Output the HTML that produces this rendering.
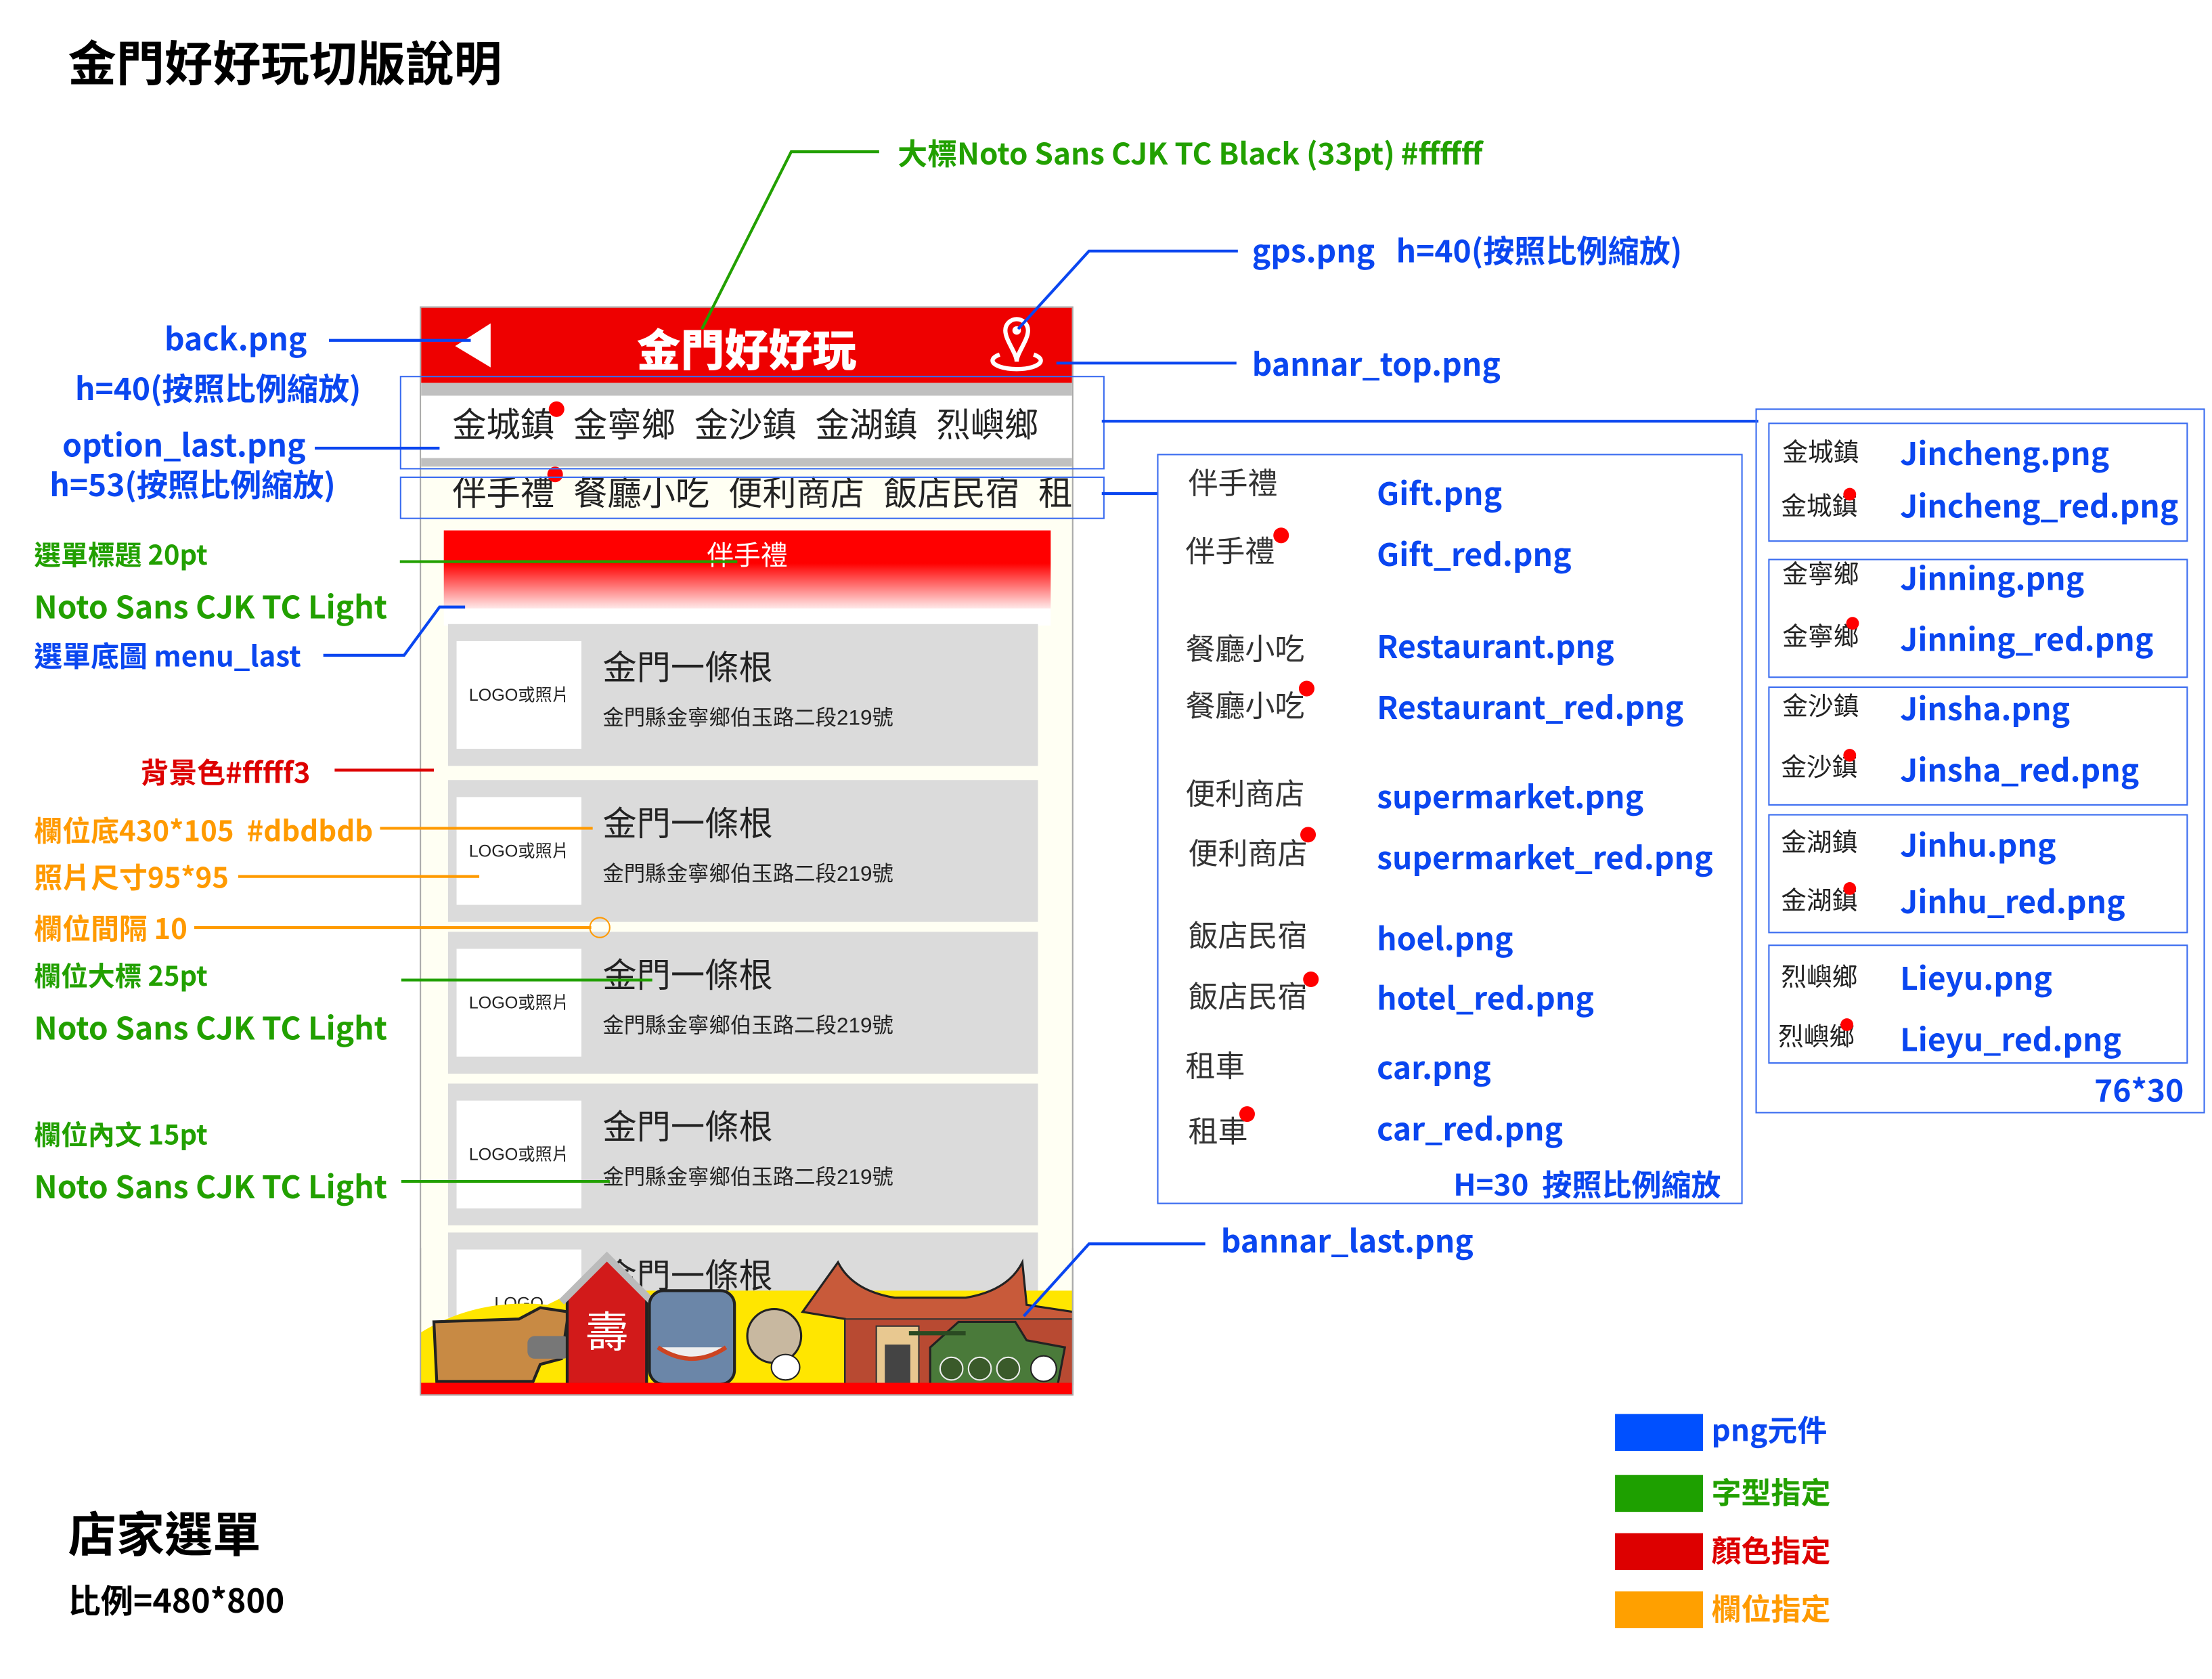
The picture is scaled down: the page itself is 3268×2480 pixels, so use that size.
<!DOCTYPE html>
<html><head><meta charset="utf-8"><style>
html,body{margin:0;padding:0;background:#fff;}
body{width:3268px;height:2480px;overflow:hidden;position:relative;}
#s{position:absolute;left:0;top:0;width:1560px;height:1184px;transform:scale(2.0949);transform-origin:0 0;}
.t{position:absolute;white-space:nowrap;line-height:1;font-family:"Liberation Sans Narrow","Noto Sans CJK TC",sans-serif;font-weight:bold;}
.b{color:#0a46f0;font-size:22px;}
.g{color:#22a000;font-size:21px;}
.o{color:#ff9a00;font-size:20px;}
.r{color:#dd0000;font-size:20px;}
.bx{position:absolute;border:1px solid #3a6cf0;}
.dot{position:absolute;width:11px;height:11px;border-radius:50%;background:#f00;}
.card{position:absolute;left:316px;width:416px;height:100px;background:#dbdbdb;}
.card .lg{position:absolute;left:6px;top:12px;width:88px;height:76px;background:#fff;font-size:12px;color:#222;line-height:76px;text-align:center;font-family:"Liberation Sans","Noto Sans CJK TC",sans-serif;}
.card .h{position:absolute;left:109px;top:20px;font-size:24px;color:#222;font-family:"Liberation Sans","Noto Sans CJK TC",sans-serif;line-height:1;}
.card .a{position:absolute;left:109px;top:59px;font-size:15px;color:#222;font-family:"Liberation Sans","Noto Sans CJK TC",sans-serif;line-height:1;}
.k{position:absolute;font-size:21px;color:#333;font-family:"Liberation Sans","Noto Sans CJK TC",sans-serif;line-height:1;white-space:nowrap;}
.k2{position:absolute;font-size:18px;color:#222;font-family:"Liberation Sans","Noto Sans CJK TC",sans-serif;line-height:1;white-space:nowrap;}
</style></head><body><div id="s">

<div class="t" style="left:48px;top:26px;font-size:34px;color:#000;">金門好好玩切版說明</div>

<div style="position:absolute;left:296px;top:216px;width:461px;height:768px;background:#fffff3;border:1px solid #aaa;box-sizing:border-box;overflow:hidden;">
  <div style="position:absolute;left:0;top:0;width:100%;height:53px;background:#ee0000;"></div>
  <div class="t" style="left:0;width:100%;text-align:center;top:12px;font-size:31px;color:#fff;font-weight:900;">金門好好玩</div>
  <svg style="position:absolute;left:0;top:0" width="461" height="60">
    <polygon points="49,11 49,42 24,27" fill="#fff"/>
    <path d="M412,16 a8,8 0 0 1 16,0 c0,7 -8,16 -8,22 c0,-6 -8,-15 -8,-22z" fill="none" stroke="#fff" stroke-width="3"/>
    <circle cx="420" cy="16" r="3" fill="#fff"/>
    <path d="M408,33 A17,6 0 1 0 432,33" fill="none" stroke="#fff" stroke-width="3"/>
  </svg>
  <div style="position:absolute;left:0;top:53px;width:100%;height:9px;background:#c0c0c0;"></div>
  <div style="position:absolute;left:0;top:62px;width:100%;height:44px;background:#fff;"></div>
  <div style="position:absolute;left:0;top:106px;width:100%;height:6px;background:#c0c0c0;"></div>
  <div class="k" style="left:22px;top:72px;font-size:24px;color:#222;">金城鎮&nbsp;&nbsp;金寧鄉&nbsp;&nbsp;金沙鎮&nbsp;&nbsp;金湖鎮&nbsp;&nbsp;烈嶼鄉</div>
  <div class="dot" style="left:90px;top:66px;"></div>
  <div class="k" style="left:22px;top:120px;font-size:24px;color:#222;">伴手禮&nbsp;&nbsp;餐廳小吃&nbsp;&nbsp;便利商店&nbsp;&nbsp;飯店民宿&nbsp;&nbsp;租車</div>
  <div class="dot" style="left:89px;top:112px;"></div>
  <div style="position:absolute;left:16px;top:157px;width:428px;height:58px;background:linear-gradient(#ff0000 0%,#ff0000 40%,#fff 100%);"></div>
  <div class="k" style="left:16px;width:428px;text-align:center;top:166px;font-size:19px;color:#fff;">伴手禮</div>
  <div style="position:absolute;left:16px;top:212px;width:428px;height:12px;background:#fff;"></div>
</div>
<div class="card" style="top:440px;"><div class="lg">LOGO或照片</div><div class="h">金門一條根</div><div class="a">金門縣金寧鄉伯玉路二段219號</div></div>
<div class="card" style="top:550px;"><div class="lg">LOGO或照片</div><div class="h">金門一條根</div><div class="a">金門縣金寧鄉伯玉路二段219號</div></div>
<div class="card" style="top:657px;"><div class="lg">LOGO或照片</div><div class="h">金門一條根</div><div class="a">金門縣金寧鄉伯玉路二段219號</div></div>
<div class="card" style="top:764px;"><div class="lg">LOGO或照片</div><div class="h">金門一條根</div><div class="a">金門縣金寧鄉伯玉路二段219號</div></div>
<div class="card" style="top:869px;height:60px;"><div class="lg" style="height:50px;">LOGO</div><div class="h">金門一條根</div></div>

<svg style="position:absolute;left:296px;top:880px" width="461" height="104">
  <path d="M0,60 Q40,35 90,40 L110,30 L461,30 L461,96 L0,96Z" fill="#ffe600"/>
  <path d="M295,10 Q305,30 335,35 L385,35 Q415,30 425,10 L428,40 L461,45 L461,96 L300,96 L300,50 L270,45Z" fill="#c85a3a" stroke="#222" stroke-width="1.5"/>
  <rect x="300" y="50" width="161" height="46" fill="#b84a32" stroke="#333" stroke-width="1"/>
  <rect x="322" y="55" width="30" height="41" fill="#e8c890" stroke="#333"/>
  <rect x="328" y="68" width="18" height="28" fill="#444"/>
  <path d="M360,70 L380,52 L420,52 L428,65 L455,70 L450,96 L360,96Z" fill="#4a7a3a" stroke="#222" stroke-width="1.5"/>
  <line x1="345" y1="60" x2="385" y2="60" stroke="#2a4a22" stroke-width="3"/>
  <circle cx="375" cy="85" r="8" fill="#3a5a2a" stroke="#eee"/><circle cx="395" cy="85" r="8" fill="#3a5a2a" stroke="#eee"/><circle cx="415" cy="85" r="8" fill="#3a5a2a" stroke="#eee"/><circle cx="440" cy="85" r="9" fill="#fff" stroke="#222"/>
  <path d="M10,52 L70,50 L85,42 L105,45 L100,78 L85,82 L80,94 L12,94 Z" fill="#c88a44" stroke="#222" stroke-width="2"/>
  <rect x="76" y="62" width="30" height="16" rx="5" fill="#777"/>
  <path d="M104,35 L132,8 L160,35 L160,96 L104,96Z" fill="#d21a1a" stroke="#222" stroke-width="2"/>
  <path d="M100,38 L132,6 L164,38" fill="none" stroke="#bbb" stroke-width="5"/>
  <text x="132" y="70" font-size="30" fill="#fff" text-anchor="middle" font-family="Noto Sans CJK TC,sans-serif">壽</text>
  <rect x="162" y="30" width="60" height="66" rx="10" fill="#6b86a8" stroke="#222" stroke-width="2"/>
  <path d="M168,70 Q192,86 216,70" fill="#eee" stroke="#c42" stroke-width="3"/>
  <circle cx="250" cy="62" r="19" fill="#c8b8a0" stroke="#222" stroke-width="1.5"/>
  <ellipse cx="258" cy="84" rx="10" ry="9" fill="#fff" stroke="#222"/>
  <rect x="0" y="95" width="461" height="9" fill="#ff0000"/>
</svg>
<div style="position:absolute;left:296px;top:880px;width:461px;height:104px;border:1px solid #aaa;border-top:none;box-sizing:border-box;"></div>

<div class="bx" style="left:282px;top:265px;width:495px;height:64px;"></div>
<div class="bx" style="left:282px;top:336px;width:495px;height:28px;"></div>

<svg style="position:absolute;left:0;top:0" width="1560" height="1184">
  <g fill="none" stroke-width="2">
    <polyline points="620,107 558,107 495,232" stroke="#22a000"/>
    <polyline points="873,177 768,177 718,232" stroke="#0a46f0"/>
    <line x1="232" y1="240" x2="332" y2="240" stroke="#0a46f0"/>
    <line x1="745" y1="256" x2="872" y2="256" stroke="#0a46f0"/>
    <line x1="222" y1="316" x2="310" y2="316" stroke="#0a46f0"/>
    <line x1="777" y1="297" x2="1240" y2="297" stroke="#0a46f0"/>
    <line x1="777" y1="348" x2="816" y2="348" stroke="#0a46f0"/>
    <line x1="282" y1="396" x2="520" y2="396" stroke="#22a000"/>
    <polyline points="228,462 285,462 310,428 328,428" stroke="#0a46f0"/>
    <line x1="236" y1="543" x2="306" y2="543" stroke="#dd0000"/>
    <line x1="268" y1="584" x2="418" y2="584" stroke="#ff9a00"/>
    <line x1="168" y1="618" x2="338" y2="618" stroke="#ff9a00"/>
    <line x1="137" y1="654" x2="417" y2="654" stroke="#ff9a00"/>
    <circle cx="423" cy="654" r="7" stroke="#ff9a00" stroke-width="1"/>
    <line x1="283" y1="691" x2="460" y2="691" stroke="#22a000"/>
    <line x1="283" y1="833" x2="430" y2="833" stroke="#22a000"/>
    <polyline points="850,877 768,877 722,928" stroke="#0a46f0"/>
  </g>
</svg>

<div class="t g" style="left:633px;top:98px;">大標Noto Sans CJK TC Black (33pt)&thinsp;#ffffff</div>
<div class="t b" style="left:883px;top:165px;">gps.png&nbsp;&nbsp;&nbsp;h=40(按照比例縮放)</div>
<div class="t b" style="left:116px;top:227px;">back.png</div>
<div class="t b" style="left:53px;top:262px;">h=40(按照比例縮放)</div>
<div class="t b" style="left:883px;top:245px;">bannar_top.png</div>
<div class="t b" style="left:44px;top:302px;">option_last.png</div>
<div class="t b" style="left:35px;top:330px;">h=53(按照比例縮放)</div>
<div class="t g" style="left:24px;top:381px;font-size:19px;">選單標題 20pt</div>
<div class="t g" style="left:24px;top:416px;font-size:22px;">Noto Sans CJK TC Light</div>
<div class="t b" style="left:24px;top:452px;font-size:20px;">選單底圖 menu_last</div>
<div class="t r" style="left:99px;top:534px;">背景色#fffff3</div>
<div class="t o" style="left:24px;top:575px;">欄位底430*105&nbsp;&nbsp;#dbdbdb</div>
<div class="t o" style="left:24px;top:608px;">照片尺寸95*95</div>
<div class="t o" style="left:24px;top:644px;">欄位間隔 10</div>
<div class="t g" style="left:24px;top:678px;font-size:19px;">欄位大標 25pt</div>
<div class="t g" style="left:24px;top:713px;font-size:22px;">Noto Sans CJK TC Light</div>
<div class="t g" style="left:24px;top:790px;font-size:19px;">欄位內文 15pt</div>
<div class="t g" style="left:24px;top:825px;font-size:22px;">Noto Sans CJK TC Light</div>
<div class="t b" style="left:861px;top:863px;">bannar_last.png</div>

<div class="bx" style="left:816px;top:320px;width:411px;height:527px;"></div>
<div class="k" style="left:838px;top:331px;">伴手禮</div><div class="t b" style="left:971px;top:336px;">Gift.png</div>
<div class="k" style="left:836px;top:379px;">伴手禮</div><div class="dot" style="left:898px;top:372px;"></div><div class="t b" style="left:971px;top:379px;">Gift_red.png</div>
<div class="k" style="left:836px;top:448px;">餐廳小吃</div><div class="t b" style="left:971px;top:444px;">Restaurant.png</div>
<div class="k" style="left:836px;top:488px;">餐廳小吃</div><div class="dot" style="left:916px;top:480px;"></div><div class="t b" style="left:971px;top:487px;">Restaurant_red.png</div>
<div class="k" style="left:836px;top:550px;">便利商店</div><div class="t b" style="left:971px;top:550px;">supermarket.png</div>
<div class="k" style="left:838px;top:592px;">便利商店</div><div class="dot" style="left:917px;top:583px;"></div><div class="t b" style="left:971px;top:593px;">supermarket_red.png</div>
<div class="k" style="left:838px;top:650px;">飯店民宿</div><div class="t b" style="left:971px;top:650px;">hoel.png</div>
<div class="k" style="left:838px;top:693px;">飯店民宿</div><div class="dot" style="left:919px;top:685px;"></div><div class="t b" style="left:971px;top:692px;">hotel_red.png</div>
<div class="k" style="left:836px;top:742px;">租車</div><div class="t b" style="left:971px;top:741px;">car.png</div>
<div class="k" style="left:838px;top:788px;">租車</div><div class="dot" style="left:874px;top:780px;"></div><div class="t b" style="left:971px;top:784px;">car_red.png</div>
<div class="t b" style="left:1025px;top:825px;font-size:21px;">H=30&nbsp;&nbsp;按照比例縮放</div>

<div class="bx" style="left:1238px;top:288px;width:315px;height:495px;"></div>
<div class="bx" style="left:1247px;top:298px;width:294px;height:82px;"></div>
<div class="bx" style="left:1247px;top:394px;width:294px;height:82px;"></div>
<div class="bx" style="left:1247px;top:484px;width:294px;height:82px;"></div>
<div class="bx" style="left:1247px;top:574px;width:294px;height:82px;"></div>
<div class="bx" style="left:1247px;top:666px;width:294px;height:82px;"></div>
<div class="k2" style="left:1257px;top:310px;">金城鎮</div><div class="t b" style="left:1340px;top:308px;">Jincheng.png</div>
<div class="k2" style="left:1256px;top:348px;">金城鎮</div><div class="dot" style="left:1300px;top:344px;width:9px;height:9px;"></div><div class="t b" style="left:1340px;top:345px;">Jincheng_red.png</div>
<div class="k2" style="left:1257px;top:396px;">金寧鄉</div><div class="t b" style="left:1340px;top:396px;">Jinning.png</div>
<div class="k2" style="left:1257px;top:440px;">金寧鄉</div><div class="dot" style="left:1302px;top:435px;width:9px;height:9px;"></div><div class="t b" style="left:1340px;top:439px;">Jinning_red.png</div>
<div class="k2" style="left:1257px;top:489px;">金沙鎮</div><div class="t b" style="left:1340px;top:488px;">Jinsha.png</div>
<div class="k2" style="left:1256px;top:532px;">金沙鎮</div><div class="dot" style="left:1300px;top:528px;width:9px;height:9px;"></div><div class="t b" style="left:1340px;top:531px;">Jinsha_red.png</div>
<div class="k2" style="left:1256px;top:585px;">金湖鎮</div><div class="t b" style="left:1340px;top:584px;">Jinhu.png</div>
<div class="k2" style="left:1256px;top:626px;">金湖鎮</div><div class="dot" style="left:1300px;top:622px;width:9px;height:9px;"></div><div class="t b" style="left:1340px;top:624px;">Jinhu_red.png</div>
<div class="k2" style="left:1256px;top:680px;">烈嶼鄉</div><div class="t b" style="left:1340px;top:678px;">Lieyu.png</div>
<div class="k2" style="left:1254px;top:722px;">烈嶼鄉</div><div class="dot" style="left:1298px;top:718px;width:9px;height:9px;"></div><div class="t b" style="left:1340px;top:721px;">Lieyu_red.png</div>
<div class="t b" style="left:1477px;top:757px;">76*30</div>

<div class="t" style="left:48px;top:1063px;font-size:34px;color:#000;">店家選單</div>
<div class="t" style="left:48px;top:1116px;font-size:23px;color:#000;">比例=480*800</div>

<div style="position:absolute;left:1139px;top:997px;width:62px;height:26px;background:#0050ff;"></div>
<div style="position:absolute;left:1139px;top:1040px;width:62px;height:26px;background:#1ea000;"></div>
<div style="position:absolute;left:1139px;top:1081px;width:62px;height:26px;background:#dd0000;"></div>
<div style="position:absolute;left:1139px;top:1122px;width:62px;height:26px;background:#ffa000;"></div>
<div class="t b" style="left:1207px;top:998px;font-size:21px;">png元件</div>
<div class="t g" style="left:1207px;top:1042px;font-size:21px;">字型指定</div>
<div class="t r" style="left:1207px;top:1083px;font-size:21px;">顏色指定</div>
<div class="t o" style="left:1207px;top:1124px;font-size:21px;">欄位指定</div>

</div></body></html>
